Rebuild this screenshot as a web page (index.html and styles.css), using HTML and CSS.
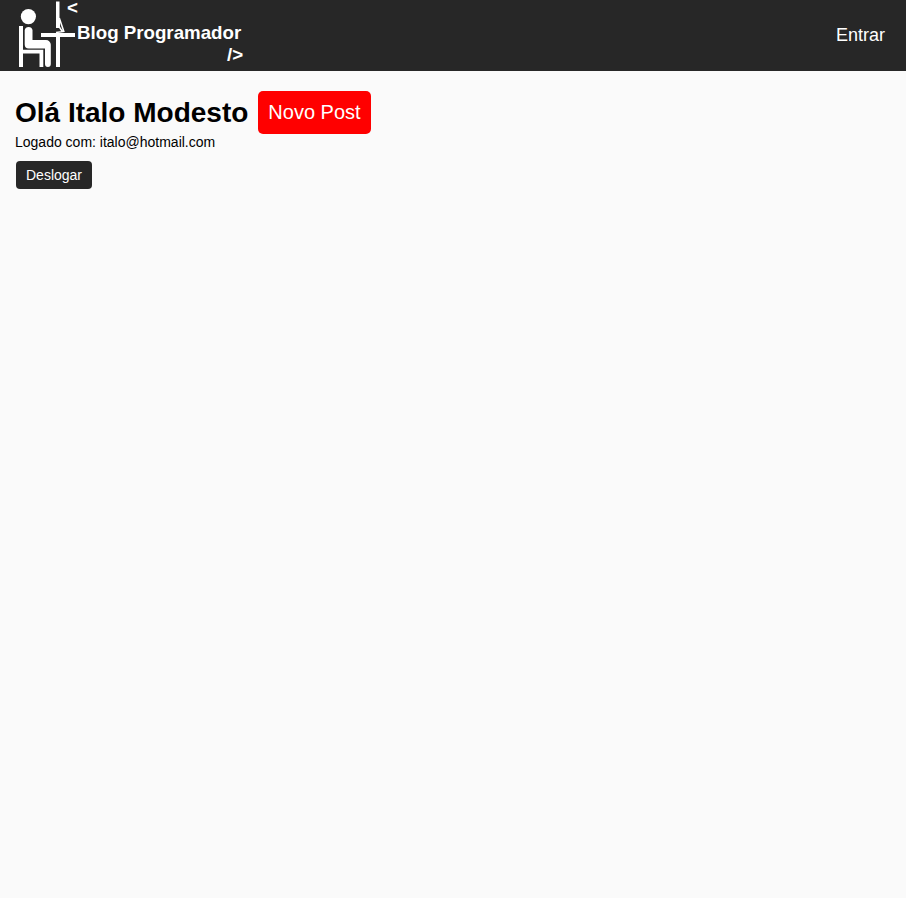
FILE: index.html
```html
<!DOCTYPE html>
<html lang="pt-BR">
<head>
  <meta charset="UTF-8">
  <title>Blog Programador</title>
  <link rel="stylesheet" href="styles.css">
</head>
<body>
  <header class="header">
    <a class="logo">
      <svg class="logo-icon" width="62" height="71" viewBox="0 0 62 71" fill="#fff" aria-hidden="true">
        <circle cx="13.400" cy="16.600" r="7.600"/>
        <path d="M4 26h4v23.800h20.300V67h-3.800V53.500H8V67H4z"/>
        <path d="M9.700 30a4 4 0 0 1 7.800 0v10h13.500a4.800 4.800 0 0 1 4.800 4.800V64a2.900 2.900 0 0 1-5.800 0V48.500H13.700a4 4 0 0 1-4-4z"/>
        <path d="M26 33h34v4H45v30h-4V37H26z"/>
        <path d="M41 1.500h3.500V28H41z"/>
        <path d="M44.300 18l4.500 13.400-7.800 1.100M44.300 20v7l3 4.500" fill="none" stroke="#fff" stroke-width="1.500"/>
      </svg>
      <span class="logo-text">
        <span>&lt;</span>
        <span>Blog Programador</span>
        <span class="logo-close">/&gt;</span>
      </span>
    </a>
    <a class="login">Entrar</a>
  </header>
  <main class="dashboard">
    <div class="welcome">
      <h1>Olá Italo Modesto</h1>
      <a class="new-post">Novo Post</a>
    </div>
    <span class="email">Logado com: italo@hotmail.com</span>
    <button class="logout">Deslogar</button>
  </main>
</body>
</html>
```
FILE: styles.css
```css
* {
  margin: 0;
  padding: 0;
  box-sizing: border-box;
}

body {
  min-height: 100vh;
  background: #fafafa;
  color: #000;
  font-family: Arial, "Liberation Sans", sans-serif;
}

.header {
  display: flex;
  align-items: center;
  justify-content: space-between;
  height: 71px;
  padding: 0 21px 0 15px;
  background: #272727;
  color: #fff;
}

.logo {
  display: flex;
}

.logo-icon {
  display: block;
}

.logo-text {
  display: grid;
  grid-template-rows: 16px 34px 10px;
  align-items: center;
  align-self: flex-start;
  font-size: 18.72px;
  font-weight: bold;
  line-height: 16px;
}

.logo-text span:first-child {
  margin-left: -10px;
}

.logo-close {
  justify-self: end;
  margin-right: -2px;
}

.login {
  font-size: 18px;
}

.dashboard {
  display: flex;
  flex-direction: column;
  align-items: flex-start;
  padding: 20px 15px;
}

.welcome {
  display: flex;
  align-items: center;
  gap: 10px;
}

.welcome h1 {
  font-size: 28px;
  line-height: 32px;
}

.new-post {
  padding: 10px;
  border-radius: 5px;
  background: #f00;
  color: #fff;
  font-size: 20px;
  line-height: 23px;
}

.email {
  font-size: 14px;
  line-height: 16px;
}

.logout {
  height: 28px;
  margin: 11px 0 0 1px;
  padding: 0 10px;
  border: 0;
  border-radius: 4px;
  background: #272727;
  color: #fff;
  font-family: inherit;
  font-size: 14px;
}
```
